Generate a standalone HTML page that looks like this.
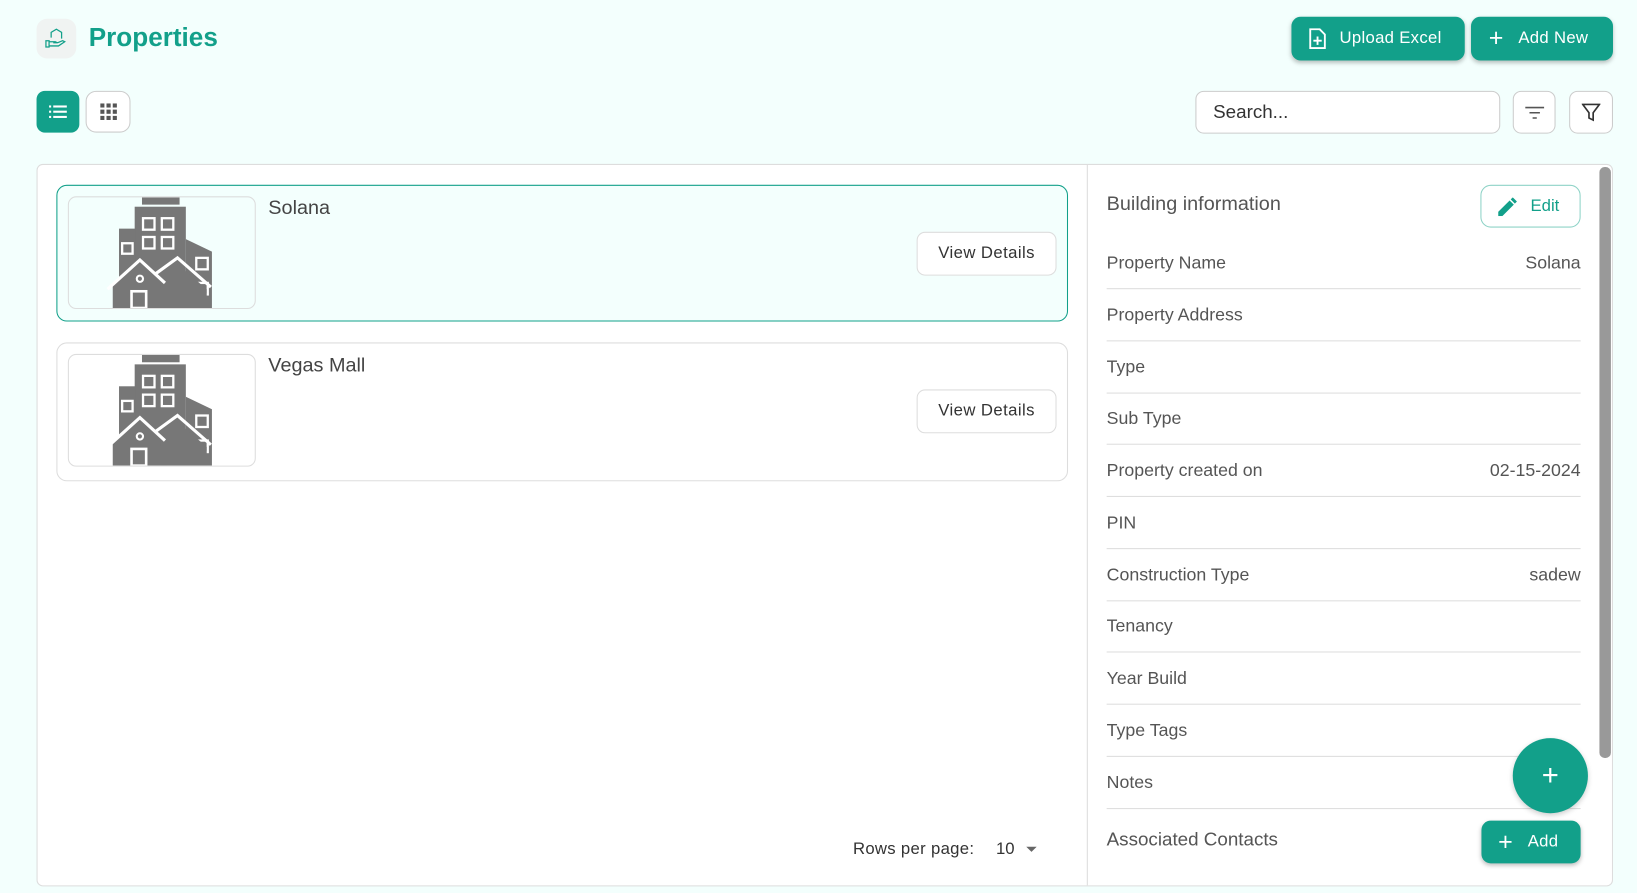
<!DOCTYPE html>
<html><head><style>
*{box-sizing:border-box;margin:0;padding:0}
html,body{width:1637px;height:893px;overflow:hidden;background:#f3fffd}
#w{width:1568px;height:856px;transform:scale(1.04401);transform-origin:0 0;position:relative;font-family:"Liberation Sans",sans-serif;color:#555}
.a{position:absolute}
.btn{position:absolute;background:#12a08a;color:#fff;border-radius:9px;font-size:16px;display:flex;align-items:center;box-shadow:0 2px 4px rgba(0,0,0,.25);letter-spacing:.3px}
.ob{position:absolute;border:1px solid #ccc;border-radius:8px;background:#fff;display:flex;align-items:center;justify-content:center}
.card{position:absolute;left:54px;width:969px;border:1px solid #ddd;border-radius:10px;background:#fff}
.img{position:absolute;left:10px;top:10px;width:180px;height:108px;border:1px solid #ddd;border-radius:8px;display:flex;justify-content:center;align-items:flex-end;overflow:hidden}
.vd{position:absolute;right:10px;top:44px;width:134px;height:42px;border:1px solid #ddd;border-radius:8px;background:#fff;font-size:16px;color:#333;display:flex;align-items:center;justify-content:center;letter-spacing:.4px}
.row{position:absolute;left:1060px;width:454px;height:50px;border-bottom:1px solid #ddd;font-size:17px;color:#555;display:flex;justify-content:space-between;align-items:center}
</style></head><body><div id="w">
<div class="a" style="left:35px;top:18px;width:38px;height:38px;border-radius:10px;background:#f0f3f2"></div>
<svg class="a" style="left:42px;top:27px" width="22" height="20" viewBox="0 0 22 20" fill="none" stroke="#12a08a" stroke-width="1.2"><path d="M7 9V4l5-3 5 3v6M2 12h3v6H2zM5 13h6l2 1h-4M5 17h9l6-4-2-1-5 2"/></svg>
<div class="a" style="left:85px;top:22px;font-size:25px;color:#12a08a;font-weight:bold">Properties</div>
<div class="btn" style="left:1237px;top:16px;width:166px;height:42px;padding-left:16px"><svg width="18" height="20" viewBox="0 0 18 20" fill="none" stroke="#fff" stroke-width="1.8"><path d="M2 1h9l5 5v13H2z M9 8v8M5 12h8"/></svg><span style="margin-left:12px">Upload Excel</span></div>
<div class="btn" style="left:1409px;top:16px;width:136px;height:42px;padding-left:17px"><span style="font-size:24px;font-weight:300">+</span><span style="margin-left:14px">Add New</span></div>
<div class="a" style="left:35px;top:87px;width:41px;height:40px;border-radius:8px;background:#12a08a"></div>
<svg class="a" style="left:46px;top:99px" width="20" height="16" viewBox="0 0 20 16" fill="#fff"><rect x="1" y="2" width="2" height="2"/><rect x="5" y="2" width="13" height="2"/><rect x="1" y="7" width="2" height="2"/><rect x="5" y="7" width="13" height="2"/><rect x="1" y="12" width="2" height="2"/><rect x="5" y="12" width="13" height="2"/></svg>
<div class="ob" style="left:82px;top:87px;width:43px;height:40px;border-radius:10px"><svg width="16" height="16" viewBox="0 0 16 16" fill="#555"><rect x="0" y="0" width="4" height="4"/><rect x="6" y="0" width="4" height="4"/><rect x="12" y="0" width="4" height="4"/><rect x="0" y="6" width="4" height="4"/><rect x="6" y="6" width="4" height="4"/><rect x="12" y="6" width="4" height="4"/><rect x="0" y="12" width="4" height="4"/><rect x="6" y="12" width="4" height="4"/><rect x="12" y="12" width="4" height="4"/></svg></div>
<div class="ob" style="left:1145px;top:87px;width:292px;height:41px;justify-content:flex-start;padding-left:16px;font-size:18px;color:#333">Search...</div>
<div class="ob" style="left:1449px;top:87px;width:41px;height:41px"><svg width="20" height="14" viewBox="0 0 20 14" stroke="#555" stroke-width="1.5"><path d="M1 2h18M5 7h10M8 12h4"/></svg></div>
<div class="ob" style="left:1503px;top:87px;width:42px;height:41px"><svg width="18" height="18" viewBox="0 0 18 18" fill="none" stroke="#333" stroke-width="1.6"><path d="M1 1h16l-6 8v7l-4-2V9z"/></svg></div>
<div class="a" style="left:35px;top:157px;width:1510px;height:692px;background:#fff;border:1px solid #ddd;border-radius:6px"></div>
<div class="a" style="left:1041px;top:158px;width:1px;height:690px;background:#ddd"></div>
<div class="a" style="left:1532px;top:160px;width:11px;height:566px;background:#999;border-radius:5px"></div>

<svg width="0" height="0" style="position:absolute"><defs><g id="bld">
<rect x="34" y="0" width="36" height="7" fill="#777"/>
<rect x="27" y="9" width="49" height="97" fill="#777"/>
<rect x="12" y="30" width="16" height="76" fill="#777"/>
<path d="M76 40L101 52V106H76z" fill="#777"/>
<g fill="none" stroke="#fff" stroke-width="2.2">
<rect x="35" y="20" width="11" height="11"/><rect x="53" y="20" width="11" height="11"/>
<rect x="35" y="38" width="11" height="11"/><rect x="53" y="38" width="11" height="11"/>
<rect x="15" y="44" width="10" height="10"/><rect x="86" y="58" width="11" height="11"/><rect x="86" y="82" width="11" height="11"/>
</g>
<path d="M6 106V84L32 62L58 84V106z" fill="#777"/>
<path d="M52 80L68 64L96 88V106H52z" fill="#777"/>
<path d="M1 88L32 60L56 82M46 74L68 58L100 86" fill="none" stroke="#fff" stroke-width="3"/>
<circle cx="32" cy="78" r="3" fill="none" stroke="#fff" stroke-width="2"/>
<rect x="24" y="90" width="14" height="16" fill="none" stroke="#fff" stroke-width="2.5"/>
</g></defs></svg>

<div class="card" style="top:177px;height:131px;border-color:#12a08a;background:#f3fffd"><div class="img"><svg width="106" height="106" viewBox="0 0 106 106"><use href="#bld"/></svg></div><div class="a" style="left:202px;top:11px;font-size:19px;color:#444">Solana</div><div class="vd">View Details</div></div>
<div class="card" style="top:328px;height:133px"><div class="img"><svg width="106" height="106" viewBox="0 0 106 106"><use href="#bld"/></svg></div><div class="a" style="left:202px;top:11px;font-size:19px;color:#444">Vegas Mall</div><div class="vd">View Details</div></div>
<div class="a" style="left:817px;top:805px;font-size:16px;color:#333;letter-spacing:.3px">Rows per page:</div>
<div class="a" style="left:954px;top:805px;font-size:16px;color:#333">10</div>
<div class="a" style="left:983px;top:811px;border:5px solid transparent;border-top-color:#666"></div>
<div class="a" style="left:1060px;top:185px;font-size:19px;color:#555">Building information</div>
<div class="a" style="left:1418px;top:177px;width:96px;height:41px;border:1px solid #8fd3c7;border-radius:10px;display:flex;align-items:center;padding-left:16px;color:#12a08a;font-size:16px"><svg width="18" height="18" viewBox="0 0 18 18" fill="#12a08a"><path d="M0 18v-4L11 3l4 4L4 18zM12 2l2-2 4 4-2 2z"/></svg><span style="margin-left:13px">Edit</span></div>
<div class="row" style="top:227px"><span>Property Name</span><span>Solana</span></div>
<div class="row" style="top:277px"><span>Property Address</span></div>
<div class="row" style="top:327px"><span>Type</span></div>
<div class="row" style="top:376px"><span>Sub Type</span></div>
<div class="row" style="top:426px"><span>Property created on</span><span>02-15-2024</span></div>
<div class="row" style="top:476px"><span>PIN</span></div>
<div class="row" style="top:526px"><span>Construction Type</span><span>sadew</span></div>
<div class="row" style="top:575px"><span>Tenancy</span></div>
<div class="row" style="top:625px"><span>Year Build</span></div>
<div class="row" style="top:675px"><span>Type Tags</span></div>
<div class="row" style="top:725px"><span>Notes</span></div>
<div class="a" style="left:1060px;top:794px;font-size:18px;color:#555">Associated Contacts</div>
<div class="btn" style="left:1419px;top:786px;width:95px;height:41px;padding-left:16px"><span style="font-size:24px;font-weight:300">+</span><span style="margin-left:14px">Add</span></div>
<div class="a" style="left:1449px;top:707px;width:72px;height:72px;border-radius:50%;background:#12a08a;color:#fff;font-size:28px;font-weight:300;display:flex;align-items:center;justify-content:center;box-shadow:0 2px 5px rgba(0,0,0,.2)">+</div>
</div></body></html>
